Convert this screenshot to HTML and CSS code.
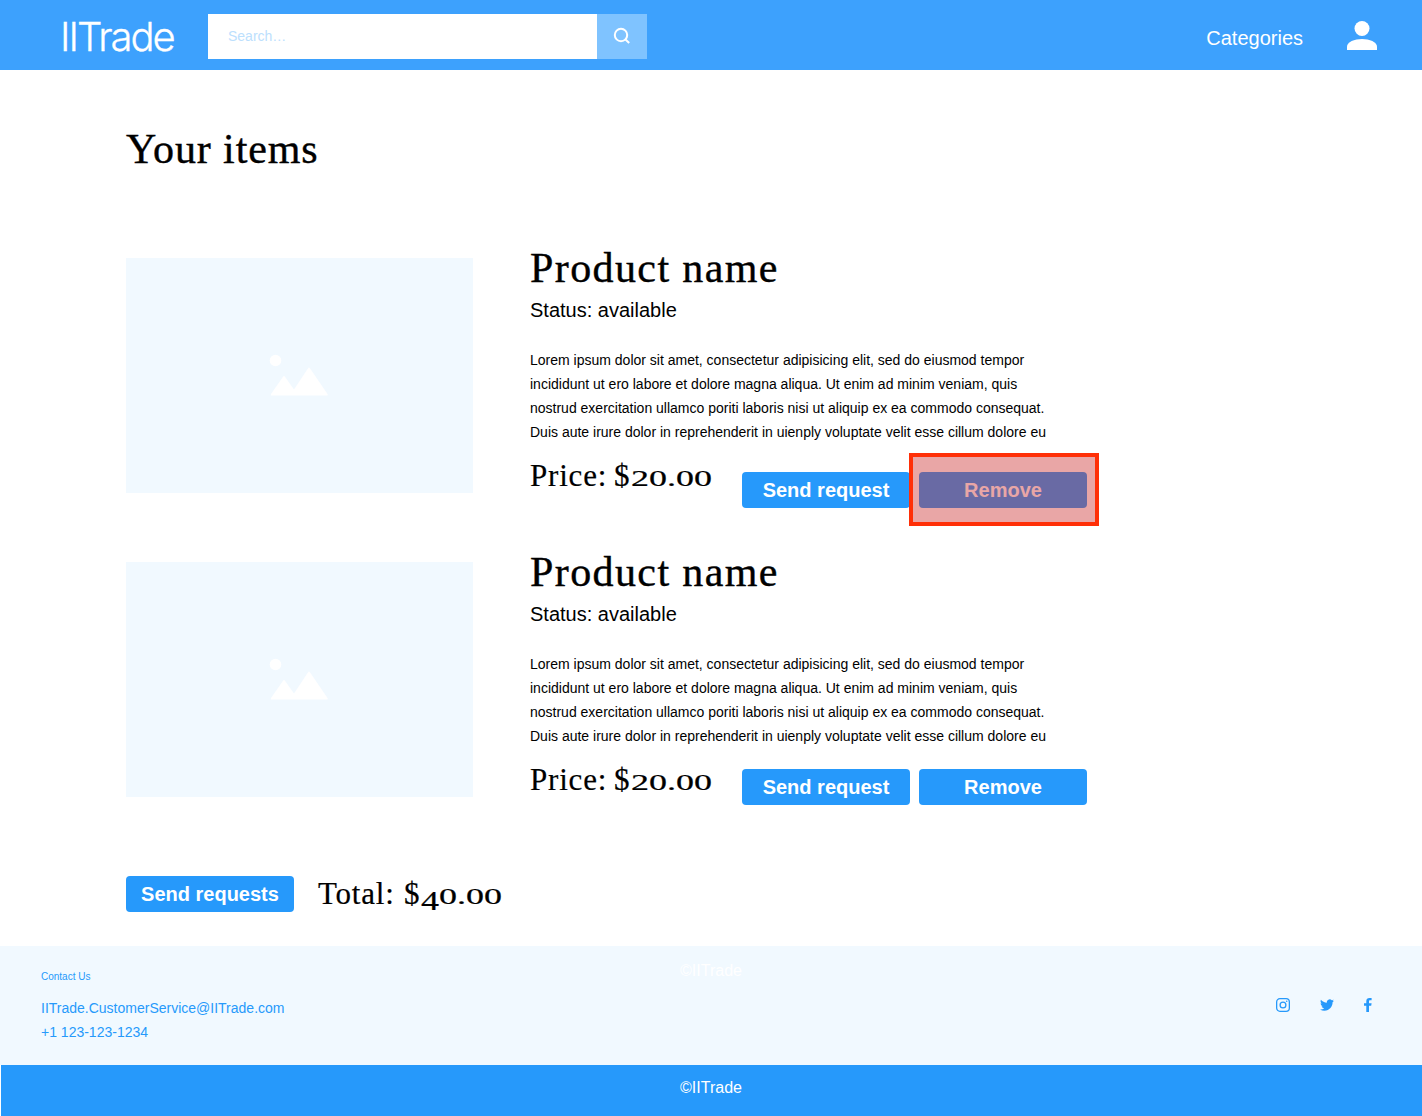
FILE: index.html
```html
<!DOCTYPE html>
<html lang="en">
<head>
<meta charset="utf-8">
<title>IITrade - Your items</title>
<link rel="stylesheet" href="styles.css">
</head>
<body>
<header class="topbar">
  <a class="logo">IITrade</a>
  <form class="search">
    <input class="search-input" type="text" placeholder="Search…" aria-label="Search">
    <button class="search-button" type="button" aria-label="Search">
      <svg width="18" height="18" viewBox="0 0 18 18" fill="none" stroke="#fff" stroke-width="2"><circle cx="8" cy="8" r="6.2"/><path d="M12.2 12.2L16.2 16"/></svg>
    </button>
  </form>
  <a class="nav-link">Categories</a>
  <svg class="user" width="30" height="29" viewBox="0 0 30 29" fill="#fff"><circle cx="15" cy="7.5" r="7.5"/><path d="M0 29v-3.500C0 21 7.500 18 15 18s15 3 15 7.500V29z"/></svg>
</header>

<main class="content">
  <h1 class="heading title">Your items</h1>

  <article class="item">
    <div class="thumb"><svg width="60" height="44" viewBox="0 0 60 44" fill="#fff"><circle cx="6.500" cy="6.500" r="5.800"/><path d="M2.500 41.500Q1.200 41.500 2 40L14.200 22.500Q15 21.500 15.800 22.500L25 35.500 39.200 14Q40 13 40.800 14L58.500 40Q59.300 41.500 58 41.500z"/></svg></div>
    <div class="details">
      <h2 class="heading name">Product name</h2>
      <p class="status">Status: available</p>
      <p class="description">Lorem ipsum dolor sit amet, consectetur adipisicing elit, sed do eiusmod tempor<br>incididunt ut ero labore et dolore magna aliqua. Ut enim ad minim veniam, quis<br>nostrud exercitation ullamco poriti laboris nisi ut aliquip ex ea commodo consequat.<br>Duis aute irure dolor in reprehenderit in uienply voluptate velit esse cillum dolore eu</p>
      <div class="purchase">
        <p class="price"><span class="price-label">Price:</span><span class="amount">$<span class="digits">20.00</span></span></p>
        <div class="actions">
          <button class="button">Send request</button>
          <button class="button highlighted">Remove</button>
        </div>
      </div>
    </div>
  </article>

  <article class="item">
    <div class="thumb"><svg width="60" height="44" viewBox="0 0 60 44" fill="#fff"><circle cx="6.500" cy="6.500" r="5.800"/><path d="M2.500 41.500Q1.200 41.500 2 40L14.200 22.500Q15 21.500 15.800 22.500L25 35.500 39.200 14Q40 13 40.800 14L58.500 40Q59.300 41.500 58 41.500z"/></svg></div>
    <div class="details">
      <h2 class="heading name">Product name</h2>
      <p class="status">Status: available</p>
      <p class="description">Lorem ipsum dolor sit amet, consectetur adipisicing elit, sed do eiusmod tempor<br>incididunt ut ero labore et dolore magna aliqua. Ut enim ad minim veniam, quis<br>nostrud exercitation ullamco poriti laboris nisi ut aliquip ex ea commodo consequat.<br>Duis aute irure dolor in reprehenderit in uienply voluptate velit esse cillum dolore eu</p>
      <div class="purchase purchase-raised">
        <p class="price"><span class="price-label">Price:</span><span class="amount">$<span class="digits">20.00</span></span></p>
        <div class="actions">
          <button class="button">Send request</button>
          <button class="button">Remove</button>
        </div>
      </div>
    </div>
  </article>

  <div class="summary">
    <button class="button">Send requests</button>
    <p class="price total"><span class="price-label">Total:</span><span class="amount">$<span class="digits"><span class="descending">4</span>0.00</span></span></p>
  </div>
</main>

<footer>
  <div class="footer-main">
    <address class="contact">
      <p class="contact-title">Contact Us</p>
      <p>IITrade.CustomerService@IITrade.com</p>
      <p>+1 123-123-1234</p>
    </address>
    <p class="copyright">©IITrade</p>
    <div class="social">
      <svg width="14" height="14" viewBox="0 0 14 14" fill="none" stroke="#2699fb" stroke-width="1.300"><rect x=".65" y=".65" width="12.700" height="12.700" rx="3.300"/><circle cx="7" cy="7" r="2.900"/><circle cx="10.700" cy="3.300" r=".8" fill="#2699fb" stroke="none"/></svg>
      <svg class="twitter" width="14" height="12" viewBox="0 0 24 20" fill="#2699fb"><path d="M23.950 2.570a10 10 0 0 1-2.820.77 4.960 4.960 0 0 0 2.160-2.720c-.95.550-2 .95-3.130 1.180a4.920 4.920 0 0 0-8.380 4.480C7.690 6.090 4.070 4.130 1.640 1.160a4.820 4.820 0 0 0-.67 2.480c0 1.710.87 3.210 2.190 4.100a4.900 4.900 0 0 1-2.230-.61v.06a4.920 4.920 0 0 0 3.950 4.830 5 5 0 0 1-2.210.08 4.940 4.940 0 0 0 4.600 3.420A9.870 9.870 0 0 1 0 17.540a14 14 0 0 0 7.550 2.210c9.050 0 14-7.500 14-13.990 0-.21 0-.42-.02-.63a9.940 9.940 0 0 0 2.460-2.550z"/></svg>
      <svg class="facebook" width="8" height="14" viewBox="0 0 8 14" fill="#2699fb"><path d="M2.300 14V7.700H0V5.200h2.300V3.300C2.300 1.100 3.500 0 5.500 0H7.600v2.300H6.200C5.200 2.300 5 2.800 5 3.500v1.700h2.600L7.200 7.700H5V14z"/></svg>
    </div>
  </div>
  <div class="footer-bar">©IITrade</div>
</footer>
</body>
</html>
```
FILE: styles.css
```css
* { box-sizing: border-box; }
body, h1, h2, p { margin: 0; }
body {
  width: 1422px;
  height: 1116px;
  overflow: hidden;
  background: #fff;
  color: #000;
  font-family: Arial, "Liberation Sans", sans-serif;
}

.topbar {
  display: flex;
  height: 70px;
  padding: 0 45px 0 60px;
  background: #3da1fd;
  color: #fff;
}
.logo {
  width: 148px;
  padding-top: 13px;
  font: 300 40px/48px Inter, sans-serif;
  letter-spacing: -2px;
  -webkit-text-stroke: .3px #fff;
}
.search { display: flex; width: 439px; height: 45px; margin-top: 14px; }
.search-input {
  width: 389px;
  padding: 0 20px 2px;
  border: 0;
  background: #fff;
  font: 14px "Liberation Sans", sans-serif;
}
.search-input::placeholder { color: #bce0fd; opacity: 1; }
.search-button {
  display: flex;
  align-items: center;
  justify-content: center;
  width: 50px;
  padding: 0 0 2px;
  border: 0;
  background: #7fc3ff;
}
.nav-link { margin: 26px 44px 0 auto; font-size: 20px; line-height: 24px; }
.user { margin-top: 21px; }

.content { height: 876px; padding: 55px 0 0 126px; }
.heading {
  font: 400 42px/48px "Liberation Serif", serif;
  letter-spacing: 1.4px;
  white-space: nowrap;
  -webkit-text-stroke: .4px #000;
}
.title { margin-bottom: 71px; letter-spacing: .9px; }
.item { display: flex; height: 304px; gap: 57px; }
.thumb {
  display: flex;
  align-items: center;
  justify-content: center;
  width: 347px;
  height: 235px;
  margin-top: 14px;
  padding: 1px 2px 0 0;
  background: #f1f9ff;
}
.status { margin-top: 6px; font-size: 20px; line-height: 24px; }
.description { margin-top: 26px; font-size: 14px; line-height: 24px; white-space: nowrap; }
.purchase { display: flex; margin-top: 13px; }
.price {
  display: flex;
  width: 212px;
  padding-top: 1px;
  font: 31px/36px "Liberation Serif", serif;
  letter-spacing: .8px;
  -webkit-text-stroke: .2px #000;
}
.price-label { width: 84px; }
.total { padding-top: 0; }
.total .price-label { width: 86px; }
.digits {
  display: inline-block;
  margin-left: 1px;
  font-size: 22.5px;
  letter-spacing: 0;
  transform: scaleX(1.6);
  transform-origin: left;
}
.descending { display: inline-block; transform: translateY(5px) scaleY(1.2); }
.actions { display: flex; gap: 9px; margin-top: 15px; }
.purchase-raised .actions { margin-top: 8px; }
.button {
  position: relative;
  width: 168px;
  height: 36px;
  padding: 0;
  border: 0;
  border-radius: 4px;
  background: #2699fb;
  color: #fff;
  font: 700 20px/36px "Liberation Sans", sans-serif;
}
.highlighted::after {
  content: "";
  position: absolute;
  inset: -19px -12px -18px -10px;
  border: 4px solid #ff2f07;
  background: rgba(201, 40, 40, .41);
}
.summary { display: flex; gap: 24px; margin-top: 24px; }

.footer-main {
  display: grid;
  grid-template-columns: 1fr auto 1fr;
  height: 119px;
  padding: 0 50px 0 41px;
  background: #f1f9ff;
  color: #2699fb;
}
.contact { padding-top: 19px; font: 14px/24px "Liberation Sans", sans-serif; }
.contact-title { margin-bottom: 7px; font-size: 10px; }
.copyright { padding: 13px 0 0 9px; color: #fff; font-size: 16px; line-height: 24px; }
.social { display: flex; justify-content: flex-end; padding-top: 52px; }
.twitter { margin: 1px 30px 0; }
.footer-bar {
  height: 51px;
  margin-left: 1px;
  padding: 11px 1px 0 0;
  background: #2699fb;
  color: #fff;
  font-size: 16px;
  line-height: 24px;
  text-align: center;
}
```
